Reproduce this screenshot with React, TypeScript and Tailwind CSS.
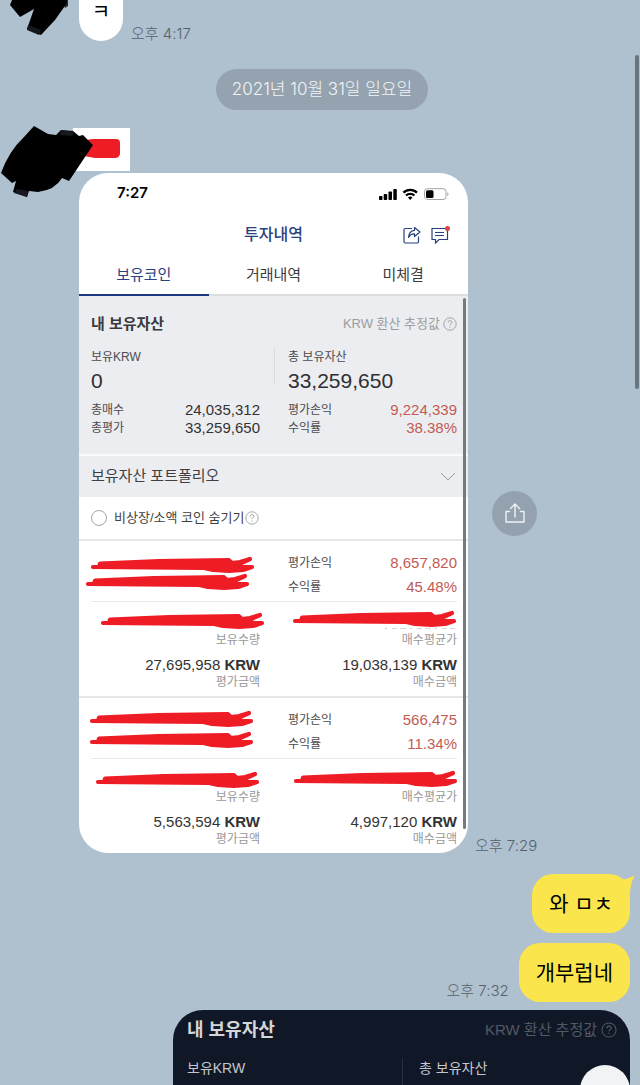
import clsx from 'clsx';
import type { ReactNode } from 'react';

interface Holding {
  id: string;
  profit: string;
  rate: string;
  valuation: string;
  cost: string;
  marks: [number, number][];
  residue?: boolean;
}

const holdings: Holding[] = [
  {
    id: 'first',
    profit: '8,657,820',
    rate: '45.48%',
    valuation: '27,695,958',
    cost: '19,038,139',
    marks: [
      [12, 26],
      [7, 43],
      [22, 82],
      [214, 80],
    ],
    residue: true,
  },
  {
    id: 'second',
    profit: '566,475',
    rate: '11.34%',
    valuation: '5,563,594',
    cost: '4,997,120',
    marks: [
      [11, 23],
      [11, 44],
      [17, 84],
      [215, 83],
    ],
  },
];

const tabs = ['보유코인', '거래내역', '미체결'];

function QuestionIcon({ className }: { className?: string }) {
  return (
    <svg viewBox="0 0 14 14" className={className} fill="none" stroke="currentColor" aria-hidden="true">
      <circle cx="7" cy="7" r="6.2" strokeWidth="0.9" />
      <path d="M5.1 5.5c0-1.2.8-1.9 1.9-1.9s1.900.7 1.900 1.7c0 1.300-1.900 1.400-1.900 2.900" strokeWidth="1" />
      <path d="M7 9.4v1.1" strokeWidth="1.1" />
    </svg>
  );
}

function StatusIcons() {
  return (
    <svg viewBox="0 0 70 12" className="h-3 w-[70px]" aria-hidden="true">
      <g fill="#000">
        <rect x="0" y="8" width="3.5" height="4" rx="0.8" />
        <rect x="4.700" y="6" width="3.5" height="6" rx="0.8" />
        <rect x="9.500" y="3.5" width="3.5" height="8.5" rx="0.8" />
        <rect x="14.300" y="1" width="3.5" height="11" rx="0.8" />
      </g>
      <g fill="none" stroke="#000" strokeWidth="2.200">
        <path d="M24.4 4.6a9.6 9.6 0 0 1 13.600 0" />
        <path d="M27 7.500a6 6 0 0 1 8.400 0" />
      </g>
      <path d="M31.200 12l-2.300-2.400a3.300 3.300 0 0 1 4.600 0z" />
      <rect x="45.500" y="0.700" width="21.500" height="10.800" rx="3" fill="none" stroke="#a3a3a3" />
      <rect x="47" y="2.200" width="7.500" height="7.800" rx="1.500" />
      <path d="M68.300 4.200c1.600.5 1.600 3.300 0 3.800z" fill="#a3a3a3" />
    </svg>
  );
}

/** One marker stroke; x and y give its left tip. */
function MarkerStroke({ x, y }: { x: number; y: number }) {
  return (
    <path
      transform={`translate(${x} ${y})`}
      d="M2 0H8L9 -3.500 68 -6 138 -6.800 141 -4 149 -5 159 -8 146 -2 152 0H161L152 3 138 4 122 3 112 0.800Z"
      fill="#ee1c25"
      stroke="#ee1c25"
      strokeWidth="4.200"
      strokeLinejoin="round"
    />
  );
}

function Figure({ label, children, red }: { label: string; children: ReactNode; red?: boolean }) {
  return (
    <div className="flex items-center justify-between">
      <dt className="text-xs text-[#4b4b4d]">{label}</dt>
      <dd className={clsx('text-[15px]', red ? 'text-[#c35b52]' : 'text-[#333]')}>{children}</dd>
    </div>
  );
}

function Amount({ value, top, bottom }: { value: string; top: string; bottom: string }) {
  return (
    <div className="text-right leading-[18px]">
      <p className="text-xs leading-[18px] text-[#98989a]">{top}</p>
      <p className="mt-[7px] text-[15px] leading-[18px] text-[#333]">
        {value} <b>KRW</b>
      </p>
      <p className="text-xs leading-4 text-[#98989a]">{bottom}</p>
    </div>
  );
}

function HoldingItem({ holding }: { holding: Holding }) {
  return (
    <li className="relative border-b-2 border-[#e6e7e9] pb-1.5 pl-3 pr-[11px] pt-2.5 last:border-b-0">
      <dl className="grid grid-cols-2 gap-x-7 border-b border-[#ebebed] pb-0.5 leading-6">
        <div className="col-start-2">
          <Figure label="평가손익" red>
            {holding.profit}
          </Figure>
          <Figure label="수익률" red>
            {holding.rate}
          </Figure>
        </div>
      </dl>
      <div className="grid grid-cols-2 gap-x-7 pt-[29px]">
        <Amount value={holding.valuation} top="보유수량" bottom="평가금액" />
        <Amount value={holding.cost} top="매수평균가" bottom="매수금액" />
      </div>
      <svg className="pointer-events-none absolute inset-0 h-full w-full" aria-hidden="true">
        {holding.residue && <path d="M306 87.500h70" stroke="#d4d4d6" strokeDasharray="2 5 5 3 6 4" />}
        {holding.marks.map(([x, y]) => (
          <MarkerStroke key={`${x}-${y}`} x={x} y={y} />
        ))}
      </svg>
    </li>
  );
}

function PortfolioCard() {
  return (
    <article className="relative min-w-0 max-w-[389px] flex-1 overflow-hidden rounded-[29px] bg-white">
      <div className="flex h-[41px] items-center justify-between pl-[38px] pr-[19px]">
        <span className="font-[Inter,sans-serif] text-[15px] font-semibold text-black">7:27</span>
        <StatusIcons />
      </div>

      <header className="grid h-[42px] grid-cols-[1fr_auto_1fr] items-center px-[18px] text-[#27427f]">
        <h1 className="col-start-2 text-base font-medium">투자내역</h1>
        <div className="flex justify-end gap-2.5">
          <button type="button" aria-label="공유">
            <svg viewBox="0 0 18 18" className="h-[18px] w-[18px]" fill="none" stroke="currentColor" strokeWidth="1.200" strokeLinejoin="round">
              <path d="M9 2.500H2.200Q1 2.500 1 3.700V15.800Q1 17 2.200 17H14.300Q15.500 17 15.500 15.800V10.500" />
              <path d="M11.500 1.500 17 6l-5.500 4.500V7.800C8.500 7.700 6.700 8.900 5.500 11.500 5.700 7.500 7.800 4.700 11.500 4.300Z" />
            </svg>
          </button>
          <button type="button" aria-label="알림">
            <svg viewBox="0 0 19 18" className="h-[18px] w-[19px]" fill="none" stroke="currentColor" strokeWidth="1.200">
              <path d="M1 2.500H16.500V13.500H8L4.500 17V13.500H1Z" />
              <path d="M4 6.500h9M4 9.500h9" />
              <circle cx="16.500" cy="2.500" r="2.500" fill="#d9463f" stroke="none" />
            </svg>
          </button>
        </div>
      </header>

      <nav className="grid grid-cols-3">
        {tabs.map((tab, index) => (
          <button
            key={tab}
            type="button"
            className={clsx(
              'border-b-2 text-[15px] leading-[38px]',
              index === 0 ? 'border-[#1d3a80] text-[#27427f]' : 'border-[#dcdddf] text-[#3c3c3e]',
            )}
          >
            {tab}
          </button>
        ))}
      </nav>

      <section className="border-b-2 border-[#f9fafb] bg-[#ecedf1] pb-[17px] pl-3 pr-[11px] pt-4">
        <div className="flex items-center justify-between leading-6">
          <h2 className="text-[15px] font-bold text-[#3a3a3c]">내 보유자산</h2>
          <span className="flex items-center gap-[3px] text-[13px] text-[#9b9c9f]">
            KRW 환산 추정값
            <QuestionIcon className="h-3.5 w-3.5" />
          </span>
        </div>
        <div className="mt-[11px] grid grid-cols-2 gap-x-7">
          <div>
            <p className="text-xs leading-5 text-[#4b4b4d]">보유KRW</p>
            <p className="text-[21px] leading-7 text-[#2f2f31]">0</p>
          </div>
          <div className="relative before:absolute before:-left-3.5 before:top-0 before:h-[38px] before:w-px before:bg-[#d9dadd]">
            <p className="text-xs leading-5 text-[#4b4b4d]">총 보유자산</p>
            <p className="text-[21px] leading-7 text-[#2f2f31]">33,259,650</p>
          </div>
        </div>
        <dl className="mt-1.5 grid grid-cols-2 gap-x-7 leading-[18px]">
          <div>
            <Figure label="총매수">24,035,312</Figure>
            <Figure label="총평가">33,259,650</Figure>
          </div>
          <div>
            <Figure label="평가손익" red>
              9,224,339
            </Figure>
            <Figure label="수익률" red>
              38.38%
            </Figure>
          </div>
        </dl>
      </section>

      <button type="button" className="flex h-[41px] w-full items-center justify-between bg-[#ecedf1] px-3 text-[15px] text-[#3f3f41]">
        보유자산 포트폴리오
        <svg viewBox="0 0 16 9" className="h-[9px] w-4" fill="none" stroke="#999a9e" aria-hidden="true">
          <path d="M1 1l7 7 7-7" />
        </svg>
      </button>

      <div className="flex items-center border-b-2 border-[#e6e7e9] pl-3 text-[13px] leading-[42px] text-[#3f3f41]">
        <input
          id="hide-small"
          type="checkbox"
          className="mr-[7px] h-4 w-4 appearance-none rounded-full border border-[#a6a6a8] bg-white checked:bg-[#27427f]"
        />
        <label htmlFor="hide-small">비상장/소액 코인 숨기기</label>
        <QuestionIcon className="ml-px h-3.5 w-3.5 text-[#9b9c9f]" />
      </div>

      <ul>
        {holdings.map(holding => (
          <HoldingItem key={holding.id} holding={holding} />
        ))}
      </ul>

      <div className="absolute bottom-6 right-0.5 top-[125px] w-[3px] rounded-full bg-[#77797c]" />
    </article>
  );
}

function DarkCard() {
  return (
    <article className="ml-auto mr-2.5 mt-2 w-full max-w-[457px] rounded-t-[30px] bg-[#101828] pl-3.5 pr-[13px] pt-1.5 text-[#c5c7ca]">
      <div className="flex items-center justify-between leading-[26px]">
        <h2 className="text-lg font-bold text-[#d5d6d8]">내 보유자산</h2>
        <span className="flex items-center gap-1 text-[15px] text-[#525963]">
          KRW 환산 추정값
          <QuestionIcon className="h-4 w-4" />
        </span>
      </div>
      <div className="mt-3.5 grid grid-cols-2 text-sm leading-5">
        <p className="pb-[7px]">보유KRW</p>
        <p className="border-l border-[#283040] pb-[7px] pl-4">총 보유자산</p>
      </div>
    </article>
  );
}

function Time({ children }: { children: ReactNode }) {
  return (
    <time className="whitespace-nowrap font-[Inter,'Noto_Sans_CJK_KR',sans-serif] text-[15px] font-light leading-[14px] text-[#56616c]">
      {children}
    </time>
  );
}

export default function App() {
  return (
    <main className="relative min-h-screen overflow-hidden bg-[#afc0cf] font-['Liberation_Sans','Noto_Sans_CJK_KR',sans-serif]">
      <div className="flex items-end gap-2 pl-[79px]">
        <p className="h-[41px] w-11 rounded-b-[22px] bg-white text-center text-xl leading-6 text-black">ㅋ</p>
        <Time>오후 4:17</Time>
      </div>

      <div className="mt-7 flex justify-center pl-1">
        <p className="rounded-full bg-[#95a3b0] px-4 font-[Inter,'Noto_Sans_CJK_KR',sans-serif] text-[17px] font-light leading-[41px] text-[#f2f5f7]">
          2021년 10월 31일 일요일
        </p>
      </div>

      <section className="mt-[18px] pl-[79px]">
        <div className="-ml-1.5 h-[43px] w-[57px] bg-white" />
        <div className="mt-0.5 flex gap-[7px]">
          <PortfolioCard />
          <div className="grid grid-rows-[1fr_auto_1fr] justify-items-end">
            <button
              type="button"
              aria-label="공유하기"
              className="row-start-2 flex h-[45px] w-[45px] items-center justify-center rounded-full bg-[#94a2b0] text-[#eef2f5]"
            >
              <svg viewBox="0 0 22 22" className="h-[22px] w-[22px]" fill="none" stroke="currentColor" strokeWidth="1.400" strokeLinecap="round" strokeLinejoin="round">
                <path d="M11 15V2M6.500 6.500 11 2l4.500 4.500M5.500 9.500H2v10.500h18V9.500h-3.500" />
              </svg>
            </button>
            <div className="row-start-3 flex items-end">
              <Time>오후 7:29</Time>
            </div>
          </div>
        </div>
      </section>

      <section className="mt-[21px] flex flex-col items-end gap-2.5 pr-2.5 text-[21px] leading-[59px] text-black">
        <p className="relative rounded-[21px] bg-[#fae54c] px-[17px]">
          와 ㅁㅊ
          <svg viewBox="0 0 14 18" className="absolute -right-[5px] top-0 h-[18px] w-3.5" fill="#fae54c" aria-hidden="true">
            <path d="M0 4.500C4 7 8 3 14 2 11 6 10 10 9 18L0 16Z" />
          </svg>
        </p>
        <div className="flex items-end gap-2.5">
          <span className="flex pb-1">
            <Time>오후 7:32</Time>
          </span>
          <p className="rounded-[21px] bg-[#fae54c] px-[17px]">개부럽네</p>
        </div>
      </section>

      <DarkCard />

      <button
        type="button"
        aria-label="맨 아래로"
        className="absolute -bottom-[30px] right-2.5 h-[50px] w-[50px] rounded-full bg-[#f2f3f5]"
      />

      {/* Marker covering the sender's avatar and name */}
      <svg className="pointer-events-none absolute left-0 top-0 h-[210px] w-[140px]" aria-hidden="true">
        <path d="M86 141q2-2 7-2h23q4 0 4 4v11q-1 4-5 4H95L84 156Z" fill="#ee1c25" />
        <path d="M62 0h6v6l-3 2z" fill="#26282e" />
        <path d="M12 0 10 5 20 17 34 9 27 29 41 35 55 20 67 3V0Z" fill="#000" />
        <path d="M28 25 41 30 39 35 27 30Z" fill="#16181d" />
        <path d="M34 126 48 134 56 135 61 130 73 131 79 136 83 135 93 145 69 181 62 178Q55 190 38 192L29 191 27 197 13 192 16 181 12 183 1 173Q9 151 24 137Z" fill="#000" />
        <path d="M17 189 28 191 27 197 14 193ZM61 130 74 132 72 136 60 135Z" fill="#17191e" />
      </svg>

      <div className="absolute right-px top-[55px] h-[334px] w-1 rounded-full bg-[#69747e]" />
    </main>
  );
}
